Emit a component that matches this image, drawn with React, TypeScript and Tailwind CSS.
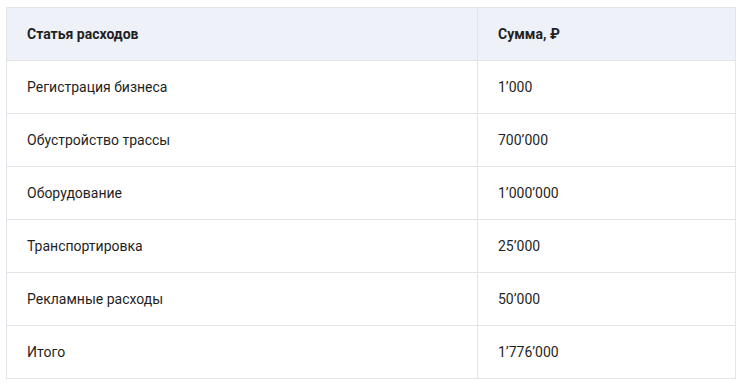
import React from 'react';

const rows = [
  { name: 'Регистрация бизнеса', sum: '1’000' },
  { name: 'Обустройство трассы', sum: '700’000' },
  { name: 'Оборудование', sum: '1’000’000' },
  { name: 'Транспортировка', sum: '25’000' },
  { name: 'Рекламные расходы', sum: '50’000' },
  { name: 'Итого', sum: '1’776’000' },
];

export default function App() {
  return (
    <div className="min-h-screen bg-white pl-[6px] pt-[7px] font-['Roboto',sans-serif] text-[14px] text-[#1f1f1f]">
      <table className="w-[730px] border-collapse border border-[#e1e4e9]">
        <thead>
          <tr className="h-[53px] bg-[#eef2f8]">
            <th className="w-[471px] border border-[#e1e4e9] pl-5 text-left font-bold">Статья расходов</th>
            <th className="border border-[#e1e4e9] pl-5 text-left font-bold">Сумма, ₽</th>
          </tr>
        </thead>
        <tbody>
          {rows.map((r) => (
            <tr key={r.name} className="h-[53px]">
              <td className="border border-[#e1e4e9] pl-5">{r.name}</td>
              <td className="border border-[#e1e4e9] pl-5">{r.sum}</td>
            </tr>
          ))}
        </tbody>
      </table>
    </div>
  );
}
